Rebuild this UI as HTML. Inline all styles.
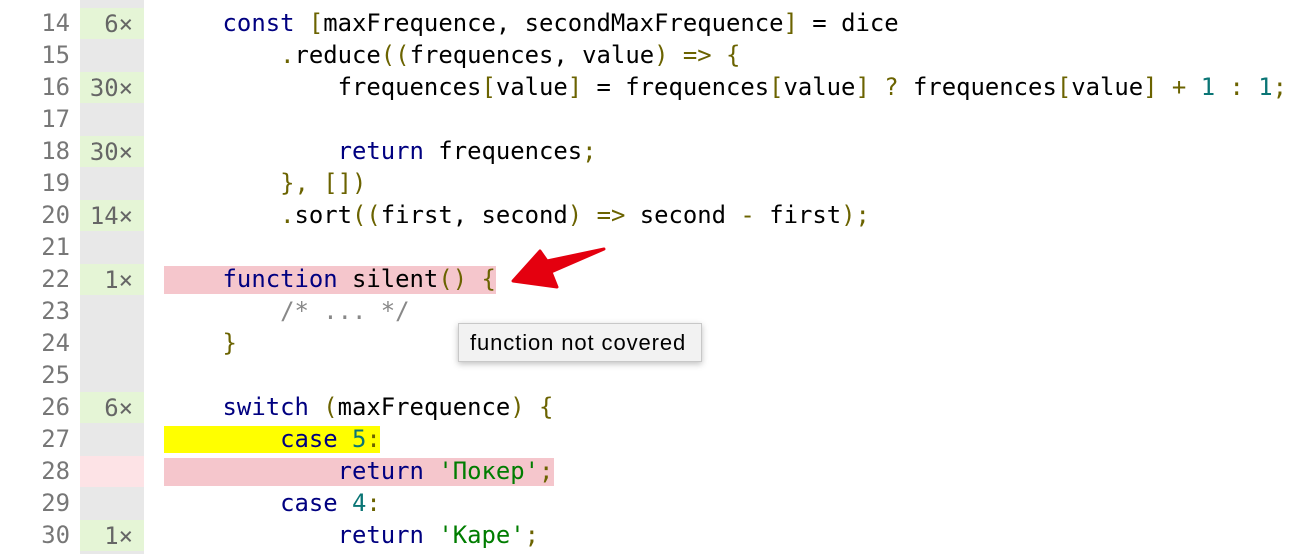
<!DOCTYPE html>
<html><head><meta charset="utf-8"><style>
body{margin:0;width:1299px;height:554px;background:#fff;position:relative;overflow:hidden;font-family:"DejaVu Sans Mono","Liberation Mono",monospace;font-size:23.9px}
.gut{position:absolute;left:80px;top:0;width:64px;height:554px;background:#e8e8e8}
.ln{position:absolute;left:0;width:70px;text-align:right;color:#777;height:32px;line-height:32px}
.ct{position:absolute;left:80px;width:64px;height:31px;line-height:32px;text-align:right;color:#666;box-sizing:border-box;padding-right:11px}
.g{background:#e5f5d6}.p{background:#fde3e6}
.code{position:absolute;left:165px;height:32px;line-height:32px;white-space:pre;color:#000}
.k{color:#000080}.b{color:#6b6300}.n{color:#0a7575}.s{color:#007d00}.c{color:#888}
.band{position:absolute;left:164px;height:28px}
</style></head><body>
<div class="gut"></div>
<div class="band" style="top:266px;width:332px;background:#f5c6cc"></div>
<div class="band" style="top:426px;width:216px;height:27px;background:#ffff00"></div>
<div class="band" style="top:458px;width:390px;background:#f5c6cc"></div>

<div class="ln" style="top:7px">14</div><div class="ct g" style="top:8px">6×</div>
<div class="ln" style="top:39px">15</div>
<div class="ln" style="top:71px">16</div><div class="ct g" style="top:72px">30×</div>
<div class="ln" style="top:103px">17</div>
<div class="ln" style="top:135px">18</div><div class="ct g" style="top:136px">30×</div>
<div class="ln" style="top:167px">19</div>
<div class="ln" style="top:199px">20</div><div class="ct g" style="top:200px">14×</div>
<div class="ln" style="top:231px">21</div>
<div class="ln" style="top:263px">22</div><div class="ct g" style="top:264px">1×</div>
<div class="ln" style="top:295px">23</div>
<div class="ln" style="top:327px">24</div>
<div class="ln" style="top:359px">25</div>
<div class="ln" style="top:391px">26</div><div class="ct g" style="top:392px">6×</div>
<div class="ln" style="top:423px">27</div>
<div class="ln" style="top:455px">28</div><div class="ct p" style="top:456px"></div>
<div class="ln" style="top:487px">29</div>
<div class="ln" style="top:519px">30</div><div class="ct g" style="top:520px">1×</div>

<div class="code" style="top:7px">    <span class="k">const</span> <span class="b">[</span>maxFrequence, secondMaxFrequence<span class="b">]</span> = dice</div>
<div class="code" style="top:39px">        <span class="b">.</span>reduce<span class="b">((</span>frequences, value<span class="b">)</span> <span class="b">=&gt;</span> <span class="b">{</span></div>
<div class="code" style="top:71px">            frequences<span class="b">[</span>value<span class="b">]</span> = frequences<span class="b">[</span>value<span class="b">]</span> <span class="b">?</span> frequences<span class="b">[</span>value<span class="b">]</span> <span class="b">+</span> <span class="n">1</span> <span class="b">:</span> <span class="n">1</span><span class="b">;</span></div>
<div class="code" style="top:135px">            <span class="k">return</span> frequences<span class="b">;</span></div>
<div class="code" style="top:167px">        <span class="b">}, [])</span></div>
<div class="code" style="top:199px">        <span class="b">.</span>sort<span class="b">((</span>first, second<span class="b">)</span> <span class="b">=&gt;</span> second <span class="b">-</span> first<span class="b">);</span></div>
<div class="code" style="top:263px">    <span class="k">function</span> silent<span class="b">()</span> <span class="b">{</span></div>
<div class="code" style="top:295px">        <span class="c">/* ... */</span></div>
<div class="code" style="top:327px">    <span class="b">}</span></div>
<div class="code" style="top:391px">    <span class="k">switch</span> <span class="b">(</span>maxFrequence<span class="b">)</span> <span class="b">{</span></div>
<div class="code" style="top:423px">        <span class="k">case</span> <span class="n">5</span><span class="b">:</span></div>
<div class="code" style="top:455px">            <span class="k">return</span> <span class="s">'Покер'</span><span class="b">;</span></div>
<div class="code" style="top:487px">        <span class="k">case</span> <span class="n">4</span><span class="b">:</span></div>
<div class="code" style="top:519px">            <span class="k">return</span> <span class="s">'Каре'</span><span class="b">;</span></div>

<div style="position:absolute;left:458px;top:323px;width:244px;height:39px;box-sizing:border-box;background:#f2f2f2;border:1px solid #c8c8c8;box-shadow:0 2px 6px rgba(0,0,0,.25);font-family:'Liberation Sans',sans-serif;font-size:22px;letter-spacing:0.9px;line-height:37px;padding-left:11px;color:#000;white-space:nowrap">function not covered</div>

<svg style="position:absolute;left:0;top:0" width="1299" height="554"><polygon points="513,281 540,251 547,261 604,249 551,272 557,287" fill="#e4000f" stroke="#e4000f" stroke-width="3" stroke-linejoin="round"/></svg>
</body></html>
